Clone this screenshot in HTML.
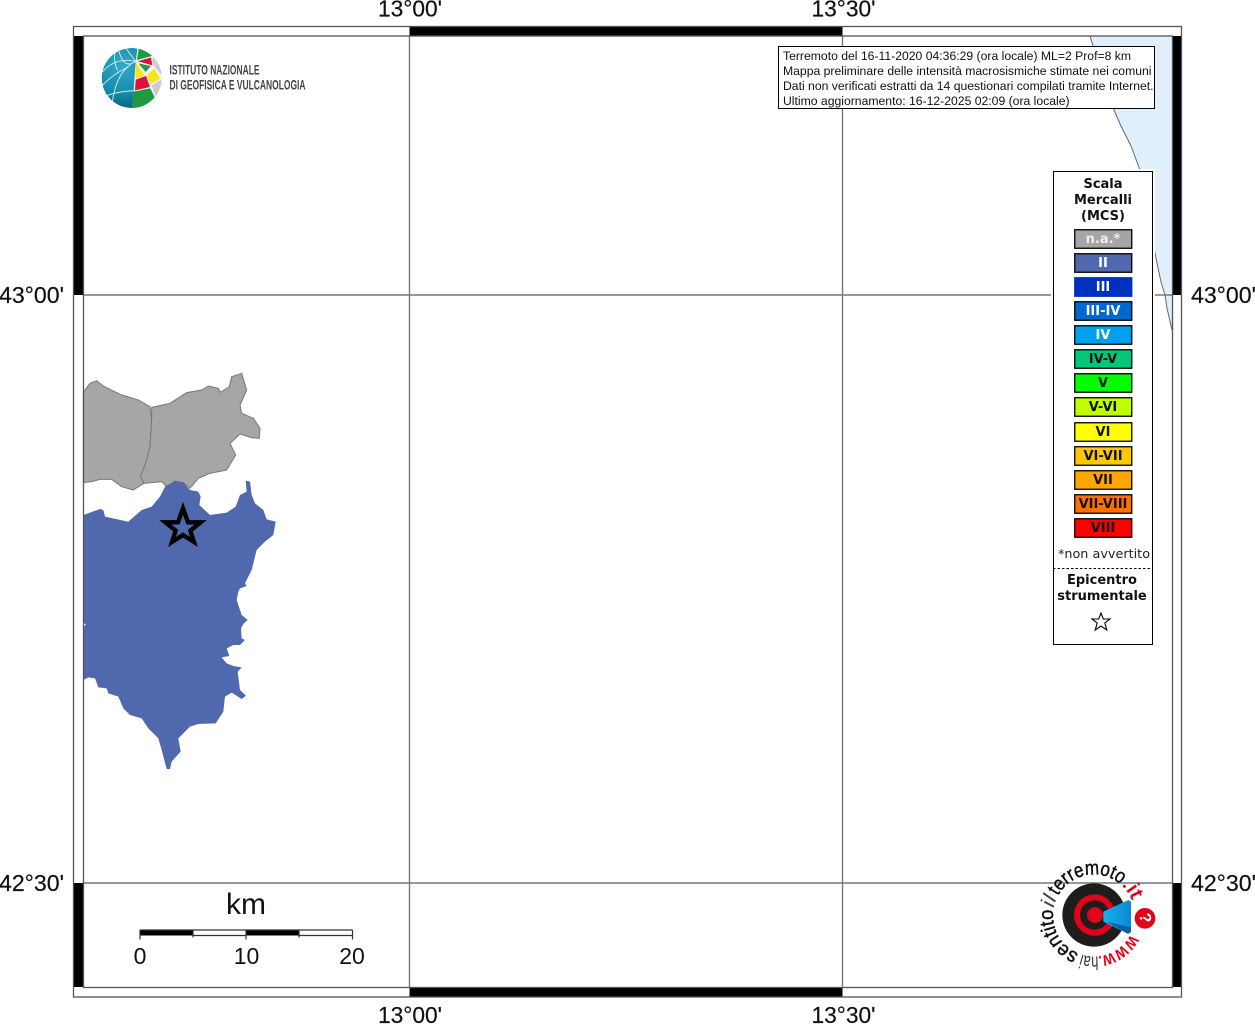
<!DOCTYPE html>
<html><head><meta charset="utf-8"><title>Mappa</title>
<style>
html,body{margin:0;padding:0;background:#fff;width:1255px;height:1024px;overflow:hidden}
svg{display:block}
.ax{font-family:"Liberation Sans",sans-serif;font-size:23px;fill:#111;stroke:#111;stroke-width:.2}
.tb{font-family:"Liberation Sans",sans-serif;font-size:12.2px;fill:#111}
.lg{font-family:"DejaVu Sans",sans-serif;font-size:13px;font-weight:bold;fill:#111;text-anchor:middle}
.sw{stroke:#000;stroke-width:1.3}
.lg.w{fill:#fff}
.hs{font-family:"Liberation Sans",sans-serif;font-size:20px;fill:#111;stroke:#111;stroke-width:.45}
</style></head><body>
<svg width="1255" height="1024" viewBox="0 0 1255 1024" xmlns="http://www.w3.org/2000/svg">
<defs>
<clipPath id="tc"><rect x="779" y="47" width="375" height="61"/></clipPath>
<clipPath id="gc"><circle cx="110" cy="108" r="90"/></clipPath>
<radialGradient id="gl" cx=".35" cy=".3" r=".8"><stop offset="0" stop-color="#35aac8"/><stop offset=".6" stop-color="#128aaa"/><stop offset="1" stop-color="#0a4f74"/></radialGradient>
<linearGradient id="bl" x1="0" x2="1"><stop offset="0" stop-color="#12b4ea"/><stop offset="1" stop-color="#0d86d4"/></linearGradient>
<path id="ring" d="M1135 915.500A41 41 0 1 1 1053 915.500A41 41 0 1 1 1135 915.500"/>
</defs>
<rect width="1255" height="1024" fill="#fff"/>

<!-- sea -->
<path d="M1090 36L1096 55L1114 110L1120 124L1131 146L1140 170L1146 205L1155 253L1158 268L1161 282L1165 295L1167 308L1172 330V36Z" fill="#dff0fc"/>
<path d="M1090 36L1096 55L1114 110L1120 124L1131 146L1140 170L1146 205L1155 253L1158 268L1161 282L1165 295L1167 308L1172 330" fill="none" stroke="#667" stroke-width="1"/>

<!-- regions -->
<g transform="translate(70 360) scale(.33333)" stroke-linejoin="round">
<path fill="#a6a6a6" stroke="#777" stroke-width="3" d="M40 97L60 70L80 62L100 78L150 103L205 120L240 140L245 180L240 260L230 300L212 350L222 370L190 390L155 380L125 358L90 358L65 365L40 368Z"/>
<path fill="#a6a6a6" stroke="#777" stroke-width="3" d="M245 142L300 130L350 98L395 90L415 78L445 85L452 97L478 80L485 50L515 40L530 90L510 135L515 160L550 175L570 205L568 235L545 233L510 222L480 250L497 285L470 330L420 340L385 355L360 385L340 368L315 363L290 380L275 365L222 370L212 350L230 300L240 260L245 180Z"/>
<path fill="#5068ae" d="M40 465L90 447L100 450L105 470L175 485L215 450L245 440L270 410L285 380L315 363L340 368L360 390L385 395L392 410L388 435L420 465L470 458L497 440L510 405L530 395L527 362L540 365L545 405L555 430L580 450L590 478L617 485L610 525L585 545L560 570L545 630L525 670L530 678L510 685L505 695L500 720L515 765L533 780L520 792L513 805L515 835L525 840L510 855L490 855L470 865L478 888L455 892L470 910L490 918L515 922L503 935L510 990L528 1007L515 1017L485 998L465 1010L460 1055L437 1090L385 1092L360 1100L325 1135L332 1175L305 1205L300 1227L290 1227L275 1170L265 1135L235 1105L215 1075L180 1065L160 1045L145 1010L115 1000L110 985L85 982L75 955L55 952L40 960V802L48 792L40 790Z"/>
<path fill="#5068ae" stroke="#000" stroke-width="13" stroke-linejoin="miter" d="M339 445L354 487L392 487L361 512L372 546L339 525L306 546L317 512L286 487L324 487Z"/>
</g>

<!-- grid -->
<g stroke="#777" stroke-width="1.4" fill="none">
<path d="M409.500 36V988M842.500 36V988M83 295H1172M83 883H1172"/>
</g>

<!-- frame -->
<g fill="#000">
<rect x="74" y="36" width="9.500" height="259"/><rect x="74" y="883" width="9.500" height="104"/>
<rect x="1172.500" y="36" width="9" height="259"/><rect x="1172.500" y="883" width="9" height="104"/>
<rect x="409.500" y="27" width="433" height="9"/><rect x="409.500" y="988" width="433" height="9"/>
</g>
<g fill="none" stroke="#555" stroke-width="1.3">
<rect x="73.500" y="26.500" width="1108" height="970.500"/>
<rect x="83.500" y="36" width="1089" height="951.500"/>
</g>

<!-- axis labels -->
<text class="ax" x="378" y="16.500" textLength="64" lengthAdjust="spacingAndGlyphs">13°00'</text>
<text class="ax" x="811.500" y="16.500" textLength="64" lengthAdjust="spacingAndGlyphs">13°30'</text>
<text class="ax" x="378" y="1023" textLength="64" lengthAdjust="spacingAndGlyphs">13°00'</text>
<text class="ax" x="811.500" y="1023" textLength="64" lengthAdjust="spacingAndGlyphs">13°30'</text>
<text class="ax" x="-1" y="303" textLength="65" lengthAdjust="spacingAndGlyphs">43°00'</text>
<text class="ax" x="-1" y="891" textLength="65" lengthAdjust="spacingAndGlyphs">42°30'</text>
<text class="ax" x="1191" y="303" textLength="65" lengthAdjust="spacingAndGlyphs">43°00'</text>
<text class="ax" x="1191" y="891" textLength="65" lengthAdjust="spacingAndGlyphs">42°30'</text>

<!-- INGV logo -->
<g transform="translate(95 42) scale(.33333)">
<g clip-path="url(#gc)">
<circle cx="110" cy="108" r="90" fill="url(#gl)"/>
<path fill="#f4f4f4" d="M122 58L128 15L205 40V200L112 200Z"/>
<path fill="#1f9a3e" d="M126 54L132 15L160 15L170 42Z"/>
<path fill="#e0103a" d="M128 58L168 46L172 70L148 63Z"/>
<path fill="#cfc6d6" d="M173 40L205 60V105L180 76L174 64Z"/>
<path fill="#f6e616" d="M122 60L149 100L122 110Z"/>
<path fill="#1f9a3e" d="M130 64L168 72L152 90L142 78Z"/>
<path fill="#f6e616" d="M156 100L177 80L196 110L167 126Z"/>
<path fill="#e0103a" d="M122 113L153 102L165 135L120 145Z"/>
<path fill="#cfc6d6" d="M170 130L199 113L205 150L182 165Z"/>
<path fill="#1f9a3e" d="M115 149L166 139L180 168L150 205H112Z"/>
<path fill="#e0103a" d="M183 170L192 150L197 152L188 174Z"/>
</g>
<g fill="none" stroke="#e8f4f8" stroke-width="2.500" clip-path="url(#gc)">
<path d="M122 58Q65 85 52 180M122 58Q60 45 22 90M122 58L92 18M122 58Q85 85 70 20"/>
<path d="M60 32Q55 60 68 85M22 130Q55 95 100 75M32 162Q70 148 118 146"/>
</g>
</g>
<text x="169.500" y="74.500" textLength="90" lengthAdjust="spacingAndGlyphs" font-family="Liberation Sans Narrow, Liberation Sans, sans-serif" font-size="14" font-weight="bold" fill="#444">ISTITUTO NAZIONALE</text>
<text x="169.500" y="89.500" textLength="136" lengthAdjust="spacingAndGlyphs" font-family="Liberation Sans Narrow, Liberation Sans, sans-serif" font-size="14" font-weight="bold" fill="#444">DI GEOFISICA E VULCANOLOGIA</text>

<!-- info box -->
<rect x="778.500" y="46.500" width="376" height="62" fill="#fff" stroke="#000" stroke-width="1"/>
<g clip-path="url(#tc)">
<text class="tb" x="783" y="60">Terremoto del 16-11-2020 04:36:29 (ora locale) ML=2 Prof=8 km</text>
<text class="tb" x="783" y="75">Mappa preliminare delle intensità macrosismiche stimate nei comuni</text>
<text class="tb" x="783" y="90">Dati non verificati estratti da 14 questionari compilati tramite Internet.</text>
<text class="tb" x="783" y="105">Ultimo aggiornamento: 16-12-2025 02:09 (ora locale)</text>
</g>

<!-- legend -->
<rect x="1051" y="169" width="104" height="478" fill="#fff"/>
<rect x="1053.500" y="171.500" width="99" height="473" fill="#fff" stroke="#000" stroke-width="1"/>
<text class="lg" x="1103" y="188">Scala</text>
<text class="lg" x="1103" y="204">Mercalli</text>
<text class="lg" x="1103" y="220">(MCS)</text>
<g>
<rect class="sw" x="1074.750" y="229.750" width="57" height="18.500" fill="#a5a5a5"/><text class="lg" style="fill:#eee" x="1103" y="243">n.a.*</text>
<rect class="sw" x="1074.750" y="253.750" width="57" height="18.500" fill="#5068ae"/><text class="lg w" x="1103" y="267">II</text>
<rect class="sw" x="1074.750" y="277.750" width="57" height="18.500" fill="#0030c0" style="stroke:#0030c0"/><text class="lg w" x="1103" y="291">III</text>
<rect class="sw" x="1074.750" y="301.750" width="57" height="18.500" fill="#0068d0"/><text class="lg w" x="1103" y="315">III-IV</text>
<rect class="sw" x="1074.750" y="325.750" width="57" height="18.500" fill="#00a0f0"/><text class="lg w" x="1103" y="339">IV</text>
<rect class="sw" x="1074.750" y="349.750" width="57" height="18.500" fill="#00c878"/><text class="lg" x="1103" y="363">IV-V</text>
<rect class="sw" x="1074.750" y="373.750" width="57" height="18.500" fill="#00ff00"/><text class="lg" x="1103" y="387">V</text>
<rect class="sw" x="1074.750" y="397.750" width="57" height="18.500" fill="#c0ff00"/><text class="lg" x="1103" y="411">V-VI</text>
<rect class="sw" x="1074.750" y="422.750" width="57" height="18.500" fill="#ffff00"/><text class="lg" x="1103" y="436">VI</text>
<rect class="sw" x="1074.750" y="446.750" width="57" height="18.500" fill="#ffc800"/><text class="lg" x="1103" y="460">VI-VII</text>
<rect class="sw" x="1074.750" y="470.750" width="57" height="18.500" fill="#ffa500"/><text class="lg" x="1103" y="484">VII</text>
<rect class="sw" x="1074.750" y="494.750" width="57" height="18.500" fill="#ff7000"/><text class="lg" x="1103" y="508">VII-VIII</text>
<rect class="sw" x="1074.750" y="518.750" width="57" height="18.500" fill="#ff0000"/><text class="lg" x="1103" y="532">VIII</text>
</g>
<text x="1104" y="558" text-anchor="middle" font-family="DejaVu Sans, sans-serif" font-size="12.800" fill="#222">*non avvertito</text>
<path d="M1053 568.500H1151" stroke="#000" stroke-width="1" stroke-dasharray="2.500 2"/>
<text class="lg" x="1102" y="584">Epicentro</text>
<text class="lg" x="1102" y="600">strumentale</text>
<path d="M1101 613L1103.300 619H1110L1104.800 623L1106.800 630L1101 626L1095.200 630L1097.200 623L1092 619H1098.700Z" fill="#fff" stroke="#000" stroke-width="1.100"/>

<!-- scale -->
<text x="246" y="914" text-anchor="middle" font-family="Liberation Sans, sans-serif" font-size="30" fill="#111">km</text>
<rect x="140" y="930" width="53" height="5.500" fill="#000"/><rect x="246" y="930" width="53" height="5.500" fill="#000"/>
<path d="M140 930H352.500M193 935.500H246M299 935.500H352.500" stroke="#333" stroke-width="1.200"/>
<path d="M140 930V939.500M193 930V937.500M246 930V939.500M299 930V937.500M352.500 930V939.500" stroke="#333" stroke-width="1.200"/>
<g font-family="Liberation Sans, sans-serif" font-size="23" fill="#111" text-anchor="middle">
<text x="140" y="964">0</text><text x="246.500" y="964">10</text><text x="352" y="964">20</text>
</g>

<!-- hai sentito logo -->
<g transform="translate(1025 850) scale(.33333)">
<circle cx="207" cy="195" r="95" fill="#1d1d1b"/>
<circle cx="209" cy="195" r="53" fill="none" stroke="#e2001a" stroke-width="18"/>
<circle cx="210" cy="195" r="24" fill="#e2001a"/>
<path d="M235 185L310 150L318 155V245L310 252L235 215Z" fill="url(#bl)"/>
<path d="M245 215L318 232V245L310 252Z" fill="#0a5fa8"/>
<circle cx="360" cy="205" r="31" fill="#e2001a"/>
</g>
<text x="0" y="0" transform="translate(1145 918) rotate(80)" text-anchor="middle" font-family="Liberation Sans, sans-serif" font-weight="bold" font-size="16" fill="#fff" dy="5">?</text>
<text class="hs" style="font-size:15px;font-weight:bold;fill:#e2001a;stroke:none"><textPath href="#ring" startOffset="19.300" textLength="41" lengthAdjust="spacingAndGlyphs">WWW.</textPath></text>
<text class="hs" style="font-size:19px;fill:#333;stroke:none"><textPath href="#ring" startOffset="60" textLength="17" lengthAdjust="spacingAndGlyphs">hai</textPath></text>
<text class="hs"><textPath href="#ring" startOffset="80" textLength="54.400" lengthAdjust="spacingAndGlyphs">sentito</textPath></text>
<text class="hs" style="fill:#444;stroke:none;font-style:italic"><textPath href="#ring" startOffset="136" textLength="10.700" lengthAdjust="spacingAndGlyphs">il</textPath></text>
<text class="hs"><textPath href="#ring" startOffset="148.900" textLength="73" lengthAdjust="spacingAndGlyphs">terremoto</textPath></text>
<text class="hs" style="fill:#e2001a;stroke:#e2001a"><textPath href="#ring" startOffset="222.500" textLength="19" lengthAdjust="spacingAndGlyphs">.it</textPath></text>
</svg>
</body></html>
